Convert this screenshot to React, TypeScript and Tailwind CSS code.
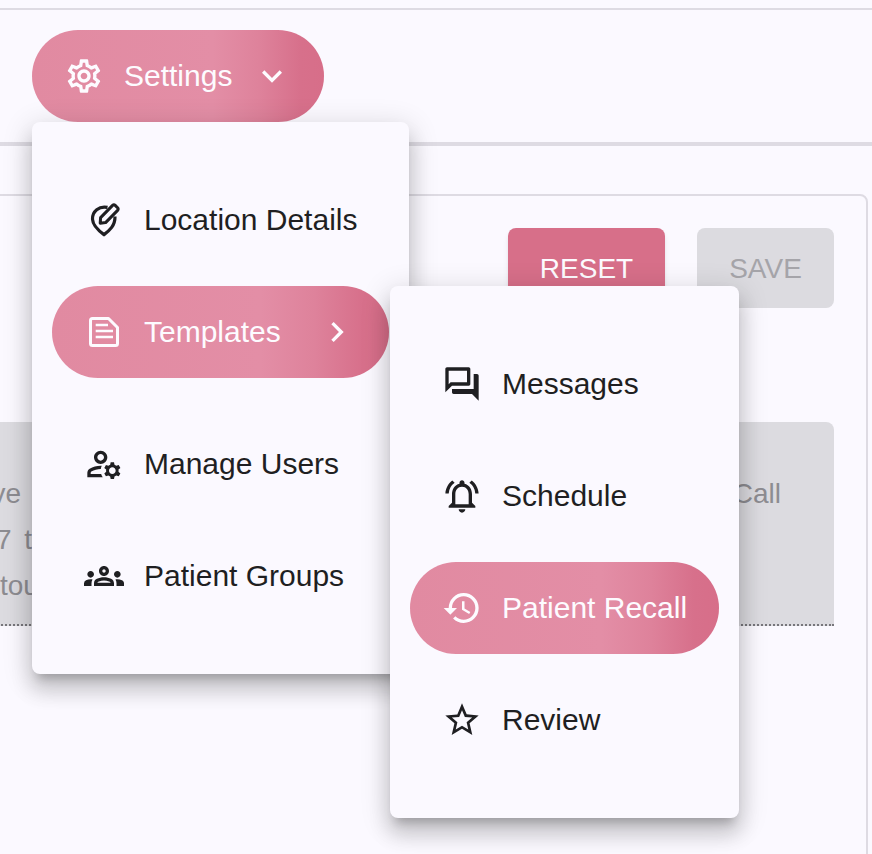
import React from "react";
import type { ComponentType, ReactNode } from "react";
import {
  MdOutlineSettings,
  MdExpandMore,
  MdChevronRight,
  MdOutlineManageAccounts,
  MdOutlineGroups,
  MdOutlineQuestionAnswer,
  MdOutlineNotificationsActive,
  MdHistory,
  MdStarBorder,
} from "react-icons/md";

type IconProps = { size?: number; className?: string };

function LocationEditIcon({ size = 40, className }: IconProps) {
  return (
    <svg width={size} height={size} viewBox="0 0 40 40" fill="none" stroke="currentColor" className={className}>
      <path
        d="M23.5 7.4C15 5.6 8.2 11.6 8.5 19.2C8.8 25.6 14.6 30.6 20 34.6C25.6 30.4 31.2 25.6 31 16.5"
        strokeWidth="3.2"
      />
      <path
        d="M16.2 23.2L16.6 17.6L28.6 5.4C29.4 4.6 30.4 4.6 31.2 5.4L33.6 7.8C34.4 8.6 34.4 9.6 33.6 10.4L21.6 22.6Z"
        strokeWidth="3"
        strokeLinejoin="round"
      />
    </svg>
  );
}

function TemplateIcon({ size = 40, className }: IconProps) {
  return (
    <svg width={size} height={size} viewBox="0 0 40 40" fill="none" stroke="currentColor" className={className}>
      <path
        d="M8.5 6.5H24.5L33.5 15.5V31.5C33.5 33 33 33.5 31.5 33.5H8.5C7 33.5 6.5 33 6.5 31.5V8.5C6.5 7 7 6.5 8.5 6.5Z"
        strokeWidth="3"
        strokeLinejoin="round"
      />
      <path d="M11.7 13H24M11.7 19H29M11.7 25H29" strokeWidth="2.6" />
    </svg>
  );
}

const activeClass =
  "bg-[linear-gradient(90deg,#e18aa1_0%,#e38ea6_62%,#de829b_78%,#d7708b_92%,#d76e89_100%)] text-[#fdfbff]";

function Item({
  icon: Icon,
  label,
  active,
  trailing,
  className = "",
  children,
}: {
  icon: ComponentType<IconProps>;
  label: string;
  active?: boolean;
  trailing?: ReactNode;
  className?: string;
  children?: ReactNode;
}) {
  return (
    <div
      className={`relative flex h-[92px] items-center gap-5 rounded-full px-8 ${
        active ? activeClass : "text-[#1f1f22]"
      } ${className}`}
    >
      <Icon size={40} className="shrink-0" />
      <span className="whitespace-nowrap pb-0.5">{label}</span>
      {trailing}
      {children}
    </div>
  );
}

const menuClass =
  "absolute flex flex-col rounded-lg bg-[#fbf9ff] px-5 py-[52px] shadow-[0_10px_10px_-6px_rgba(0,0,0,0.2),0_16px_20px_2px_rgba(0,0,0,0.14),0_6px_28px_4px_rgba(0,0,0,0.12)]";

export default function App() {
  return (
    <div className="h-[854px] w-[872px] overflow-hidden bg-[#fbf9ff] pt-2 font-['Liberation_Sans',sans-serif] text-[28px]">
      <div className="border-y-2 border-b-4 border-[#dedbe3] px-8 py-5 text-[30px]">
        <div className="relative w-fit">
          <div className={`flex h-[92px] items-center gap-5 rounded-full px-8 ${activeClass}`}>
            <MdOutlineSettings size={40} />
            <span className="pb-0.5">Settings</span>
            <MdExpandMore size={40} />
          </div>

          <div className={`${menuClass} left-0 top-full w-[377px]`}>
            <Item icon={LocationEditIcon} label="Location Details" />
            <Item
              icon={TemplateIcon}
              label="Templates"
              active
              className="mt-5"
              trailing={<MdChevronRight size={40} className="ml-auto" />}
            >
              <div className={`${menuClass} left-[calc(100%+1px)] top-0 w-[349px] gap-5`}>
                <Item icon={MdOutlineQuestionAnswer} label="Messages" />
                <Item icon={MdOutlineNotificationsActive} label="Schedule" />
                <Item icon={MdHistory} label="Patient Recall" active />
                <Item icon={MdStarBorder} label="Review" />
              </div>
            </Item>
            <Item icon={MdOutlineManageAccounts} label="Manage Users" className="mt-10" />
            <Item icon={MdOutlineGroups} label="Patient Groups" className="mt-5" />
          </div>
        </div>
      </div>

      <div className="-ml-32 mr-1 mt-12 h-[700px] rounded-lg border-2 border-[#dedbe3] p-8">
        <div className="flex justify-end gap-8">
          <div className="flex h-20 w-[157px] items-center justify-center rounded-lg bg-[#d76f89] pt-0.5 text-[#fdfbff] shadow-md">
            RESET
          </div>
          <div className="flex h-20 w-[137px] items-center justify-center rounded-lg bg-[#dcdbe0] pt-0.5 text-[#a5a4a9]">
            SAVE
          </div>
        </div>

        <div className="mt-[114px] h-[204px] rounded-t-lg border-b-2 border-dotted border-[#77767b] bg-[#dcdbe0] text-[#8d8c91]">
          <div className="flex flex-col pt-[49px] leading-[46px]">
            <div className="flex justify-between pl-[5px]">
              <span>We have</span>
              <span className="mr-[53px]">Call</span>
            </div>
            <span className="ml-[90px] [word-spacing:5px]">7 to</span>
            <span className="ml-[94px]">tou</span>
          </div>
        </div>
      </div>
    </div>
  );
}
